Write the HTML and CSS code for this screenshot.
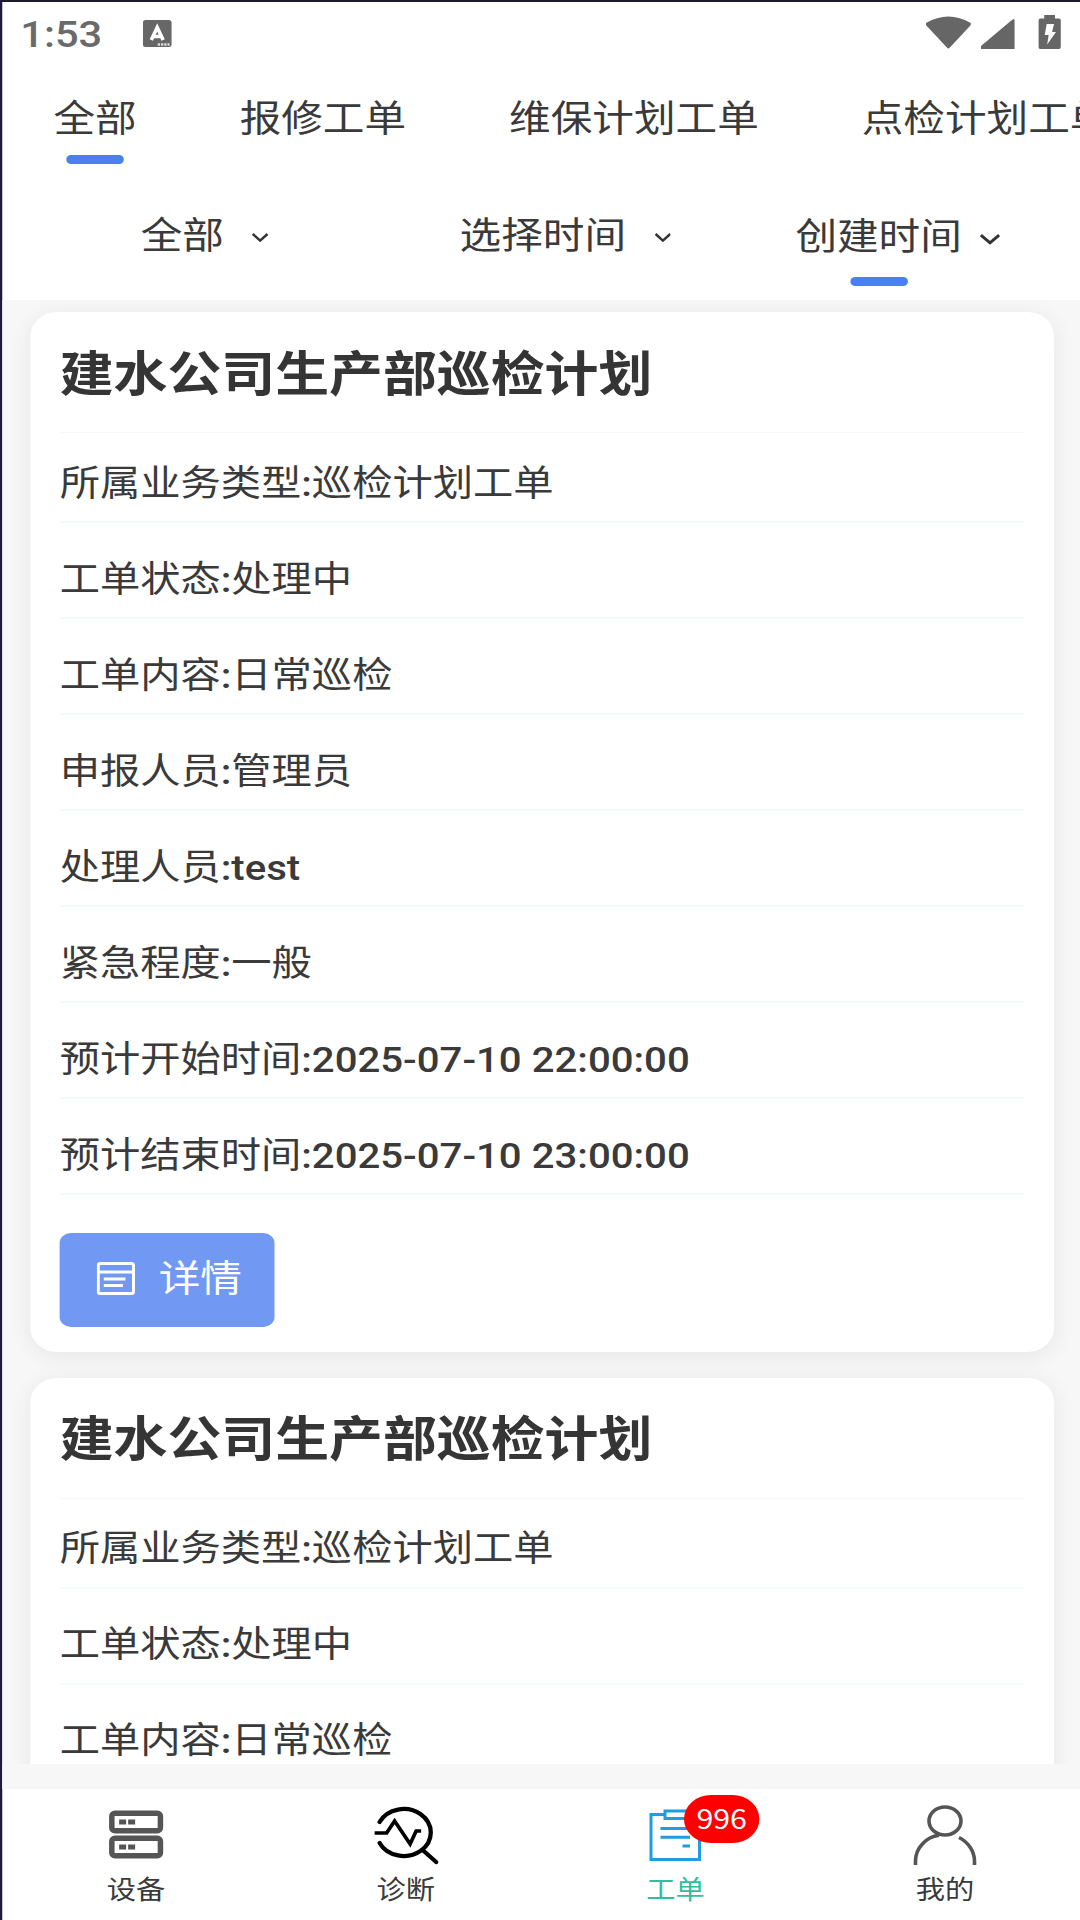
FILE: index.html
```html
<!DOCTYPE html>
<html lang="zh-CN">
<head>
<meta charset="utf-8">
<title>工单</title>
<link rel="stylesheet" href="styles.css">
</head>
<body>
<div class="screen">
  <header class="status">
    <span class="clock">1:53</span>
    <svg class="ico-input" viewBox="0 0 29 27" preserveAspectRatio="none"><rect width="29" height="27" rx="2.500" fill="#676767"/><path d="M8.500 20L14.500 7.500L20.500 20M11 16.500H18" fill="none" stroke="#fff" stroke-width="3.600"/><path d="M15 24.500H27" stroke="#ddd" stroke-width="2.500" stroke-dasharray="2.300 1"/></svg>
    <span class="spacer"></span>
    <svg class="ico-wifi" viewBox="0 0 45 33" preserveAspectRatio="none"><path d="M0 7Q22.500-6 45 7V9L24 31.500Q22.500 33.500 21 31.500L0 9Z" fill="#666"/></svg>
    <svg class="ico-signal" viewBox="0 0 34 30" preserveAspectRatio="none"><path d="M0 30V27L30.500 1.500Q34-1.500 34 1.500V30Z" fill="#666"/></svg>
    <svg class="ico-battery" viewBox="0 0 23 34" preserveAspectRatio="none"><path d="M6 0H17V3.500H21Q23 3.500 23 5.500V32Q23 34 21 34H2Q0 34 0 32V5.500Q0 3.500 2 3.500H6Z" fill="#666"/><path d="M8.500 9H16L14 17H18L9 29.500L10.500 20H6.500Z" fill="#fff"/></svg>
  </header>

  <nav class="tabs">
    <span class="tab active">全部</span><span class="tab">报修工单</span><span class="tab">维保计划工单</span><span class="tab">点检计划工单</span>
  </nav>

  <div class="filters">
    <div class="filter f1"><span>全部</span><svg class="chev" viewBox="0 0 16 9" preserveAspectRatio="none"><path d="M.8 1L8 7.600L15.200 1" fill="none" stroke="#333" stroke-width="2.400"/></svg></div>
    <div class="filter f2"><span>选择时间</span><svg class="chev" viewBox="0 0 16 9" preserveAspectRatio="none"><path d="M.8 1L8 7.600L15.200 1" fill="none" stroke="#333" stroke-width="2.400"/></svg></div>
    <div class="filter f3 active"><span>创建时间</span><svg class="chev" viewBox="0 0 20 11" preserveAspectRatio="none"><path d="M1 1.200L10 9.200L19 1.200" fill="none" stroke="#333" stroke-width="2.900"/></svg></div>
  </div>

  <main class="list">
    <article class="card">
      <h2>建水公司生产部巡检计划</h2>
      <p class="row">所属业务类型<b>:</b>巡检计划工单</p>
      <p class="row">工单状态<b>:</b>处理中</p>
      <p class="row">工单内容<b>:</b>日常巡检</p>
      <p class="row">申报人员<b>:</b>管理员</p>
      <p class="row">处理人员<b>:test</b></p>
      <p class="row">紧急程度<b>:</b>一般</p>
      <p class="row">预计开始时间<b>:2025-07-10 22:00:00</b></p>
      <p class="row">预计结束时间<b>:2025-07-10 23:00:00</b></p>
      <button class="detail"><svg viewBox="0 0 38 33" preserveAspectRatio="none"><g fill="none" stroke="#fff"><rect x="1.500" y="1.500" width="35" height="30" rx="2" stroke-width="3"/><path d="M1 10H37" stroke-width="3"/><path d="M7 17H28.500M7 23.500H26" stroke-width="3.200"/></g></svg><span>详情</span></button>
    </article>
    <article class="card">
      <h2>建水公司生产部巡检计划</h2>
      <p class="row">所属业务类型<b>:</b>巡检计划工单</p>
      <p class="row">工单状态<b>:</b>处理中</p>
      <p class="row">工单内容<b>:</b>日常巡检</p>
    </article>
  </main>

  <footer class="tabbar">
    <div class="item"><svg viewBox="0 0 72 66" preserveAspectRatio="none"><g fill="none" stroke="#555" stroke-width="5.500"><rect x="11.700" y="8.300" width="48.600" height="17.500" rx="3"/><rect x="11.700" y="33.200" width="48.600" height="17.500" rx="3"/></g><path d="M19 14.500h7v5h-7zM28 14.500h7v5h-7zM19 39.500h7v5h-7zM28 39.500h7v5h-7z" fill="#555"/></svg><span>设备</span></div>
    <div class="item"><svg viewBox="0 0 72 66" preserveAspectRatio="none"><g fill="none" stroke="#000" stroke-width="4.300" stroke-linecap="round"><path d="M9.500 17A27 23.500 0 1 1 9.500 38M52.500 45L66 57"/><path d="M4.500 28H16.500L24.500 16L40 39L46 26H51" stroke-linecap="butt" stroke-width="3.700"/></g></svg><span>诊断</span></div>
    <div class="item on"><svg viewBox="0 0 72 66" preserveAspectRatio="none"><g fill="none" stroke="#219ce2" stroke-width="3"><path d="M25 9.500H12V54.500H60.500V9.500H49"/><rect x="26" y="6" width="24" height="7.500"/><path d="M21.500 23.500H51M21.500 32.300H51M43.500 41H51"/></g></svg><i class="badge">996</i><span>工单</span></div>
    <div class="item"><svg viewBox="0 0 72 66" preserveAspectRatio="none"><g fill="none" stroke="#555" stroke-width="3.600"><ellipse cx="36" cy="16" rx="16" ry="14"/><path d="M6.500 60V56C6.500 43 17 32 30 30.300M50 32.500C59 37 65.500 46 65.500 56V60"/></g></svg><span>我的</span></div>
  </footer>
</div>
</body>
</html>
```
FILE: styles.css
```css
* { box-sizing: border-box; }
html, body { margin: 0; height: 1920px; overflow: hidden; background: #fff; }

.screen {
  width: 960px;
  height: 1920px;
  transform: scaleX(1.125);
  transform-origin: 0 0;
  display: flex;
  flex-direction: column;
  overflow: hidden;
  border-top: 2px solid #1d1a2b;
  border-left: 2px solid #1f1b3c;
  background: #fff;
  color: #3a3a3a;
  font-family: Roboto, "Noto Sans CJK SC", sans-serif;
  font-size: 35.800px;
}
svg { display: block; flex: none; }

.status { height: 60px; display: flex; align-items: flex-start; padding-left: 16px; flex: none; }
.clock { font-size: 37px; line-height: 44px; font-weight: 500; color: #6a6a6a; padding-top: 11px; width: 109px; }
.ico-input { width: 25.500px; height: 27px; margin-top: 18px; }
.spacer { flex: 1; }
.ico-wifi { width: 40px; height: 33px; margin: 14px 8.500px 0 0; }
.ico-signal { width: 30px; height: 30px; margin: 17px 21px 0 0; }
.ico-battery { width: 20px; height: 34px; margin: 13px 17.500px 0 0; }

.tabs { height: 115px; flex: none; display: flex; gap: 91.500px; padding-left: 45.500px; white-space: nowrap; font-size: 37px; }
.tab { flex: none; line-height: 54px; padding-top: 31px; display: flex; flex-direction: column; align-items: center; }
.active::after { content: ""; width: 51px; height: 8.500px; border-radius: 4px; background: #4b80f1; }
.tab.active::after { margin-top: 8px; }

.filters { height: 123px; flex: none; display: flex; font-size: 37px; line-height: 54px; }
.filter { display: flex; align-items: center; height: 54px; margin-top: 33px; }
.filter .chev { width: 14.500px; height: 9px; margin-top: 0; }
.f1 { width: 283.500px; margin-left: 123px; gap: 25px; }
.f2 { width: 298.500px; gap: 25px; }
.f3 { display: grid; grid-template-columns: 148px 18px; column-gap: 16px; height: 73px; margin-top: 34px; row-gap: 12px; }
.filter.f3 .chev { width: 18px; height: 10.500px; margin-top: 3px; }
.f3::after { margin-left: 48.500px; }

.list { height: 1464px; flex: none; overflow: hidden; background: #f7f7f7; padding: 12px 23.500px 0 25px; }
.card { height: 1040px; margin-bottom: 26px; padding: 0 26px 0 26px; background: #fff; border-radius: 24px; box-shadow: 0 4px 22px rgba(0, 0, 0, .07); }
.card h2 { margin: 0; height: 121px; padding-top: 28px; line-height: 70px; font-size: 47.900px; font-weight: 700; color: #353535; white-space: nowrap; border-bottom: 1px solid #f7f8f8; }
.row { margin: 0; height: 96px; padding-top: 30px; line-height: 54px; white-space: nowrap; border-bottom: 2px solid #f6fafb; }
h2 + .row { height: 90px; padding-top: 24px; }
.card + .card h2 { padding-top: 27px; }
.card + .card .row { padding-top: 29px; }
.card + .card h2 + .row { padding-top: 23px; }
.row b { font-weight: 500; font-size: 35.700px; }
.detail { display: flex; align-items: center; margin: 38px 0 0; width: 191px; height: 94px; padding: 0 0 0 33px; border: 0; border-radius: 10px; background: #7199f3; color: #fff; font: inherit; font-size: 37px; gap: 21px; }
.detail svg { width: 34px; height: 33px; margin-top: -3px; }
.detail span { line-height: 54px; margin-top: -1px; }

.tabbar { flex: 1; display: flex; border-top: 25px solid #f7f7f7; margin-left: -1px; }
.item { position: relative; flex: 1; display: flex; flex-direction: column; align-items: center; padding-top: 16px; font-size: 26px; line-height: 38px; }
.item svg { width: 64px; height: 66px; }
.item > span { margin-top: 0; }
.item.on { color: #2fbf9f; }
.badge { position: absolute; left: 127.500px; top: 6px; width: 67px; height: 48px; border-radius: 24px; background: #f00; color: #fff; font: 27px/46px "Noto Sans CJK SC", sans-serif; text-align: center; }
```
